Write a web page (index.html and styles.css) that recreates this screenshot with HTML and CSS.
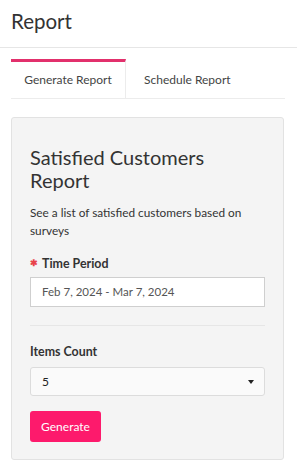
FILE: index.html
```html
<!DOCTYPE html>
<html>
<head>
<meta charset="utf-8">
<link rel="stylesheet" href="styles.css">
</head>
<body>
<header class="page-header"><h1 class="page-title">Report</h1></header>
<nav class="tabs">
  <div class="tab tab-active">Generate Report</div>
  <div class="tab tab-second">Schedule Report</div>
</nav>
<section class="card">
  <h2 class="card-title">Satisfied Customers Report</h2>
  <p class="card-desc">See a list of satisfied customers based on surveys</p>
  <div class="field field-first">
    <label class="label"><span class="req">&#10033;</span>Time Period</label>
    <div class="input">Feb 7, 2024 - Mar 7, 2024</div>
  </div>
  <hr class="divider">
  <div class="field field-second">
    <label class="label">Items Count</label>
    <div class="select"><span>5</span><span class="caret"></span></div>
  </div>
  <button class="btn">Generate</button>
</section>
</body>
</html>
```
FILE: styles.css
```css
* { box-sizing: border-box; }
body {
  margin: 0;
  font-family: "Lato", "Open Sans", sans-serif;
  color: #333;
  background: #fff;
  width: 297px;
}
.page-header {
  height: 48px;
  border-bottom: 1px solid #e6e6e6;
  padding: 6px 11px 0;
}
.page-title {
  margin: 0;
  font-size: 20.5px;
  font-weight: 400;
  line-height: 30px;
  color: #333;
}
.tabs {
  display: flex;
  margin: 11px 12px 0 11px;
  border-bottom: 1px solid #ececec;
  height: 40px;
}
.tab {
  font-size: 12px;
  color: #444;
  line-height: 36px;
  white-space: nowrap;
  border-top: 3px solid transparent;
}
.tab-active {
  width: 115px;
  text-align: center;
  border-top-color: #e2306c;
  border-right: 1px solid #ececec;
}
.tab-second { padding-left: 18px; }
.card {
  margin: 18px 13px 0 11px;
  background: #f4f4f4;
  border: 1px solid #e2e2e2;
  border-radius: 3px;
  padding: 28px 18px 17px;
}
.card-title {
  margin: 0;
  font-size: 20px;
  font-weight: 400;
  line-height: 23px;
  color: #333;
}
.card-desc {
  margin: 12px 0 0;
  font-size: 11.8px;
  line-height: 18px;
  color: #333;
}
.field-first { margin-top: 14px; }
.field-second { margin-top: 17px; }
.label {
  display: block;
  font-size: 12.4px;
  font-weight: 700;
  color: #333;
  line-height: 18px;
  margin-bottom: 4px;
}
.field-second .label { margin-bottom: 6px; }
.req {
  color: #e8434a;
  font-size: 9px;
  margin-right: 4px;
  vertical-align: 2px;
}
.input {
  height: 30px;
  background: #fff;
  border: 1px solid #cfcfcf;
  padding: 0 11px;
  font-size: 11.5px;
  line-height: 28px;
  color: #555;
}
.divider {
  border: 0;
  border-top: 1px solid #e6e6e6;
  margin: 18px 0 0;
}
.select {
  height: 29px;
  background: #fafafa;
  border: 1px solid #dcdcdc;
  border-radius: 3px;
  padding: 0 10px 0 11px;
  font-size: 12px;
  line-height: 27px;
  color: #222;
  display: flex;
  justify-content: space-between;
  align-items: center;
}
.caret {
  width: 0;
  height: 0;
  border-left: 3.5px solid transparent;
  border-right: 3.5px solid transparent;
  border-top: 4px solid #222;
}
.btn {
  display: block;
  margin-top: 15px;
  width: 71px;
  height: 31px;
  padding: 0;
  border: 0;
  border-radius: 3px;
  background: #fd1a6c;
  color: #fff;
  font-family: inherit;
  font-size: 12px;
  text-align: center;
}
```
